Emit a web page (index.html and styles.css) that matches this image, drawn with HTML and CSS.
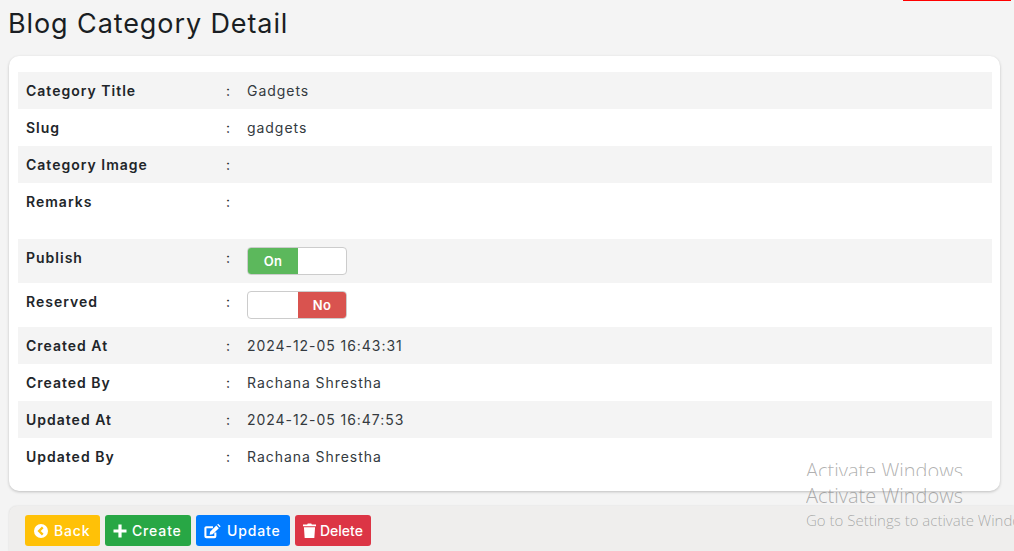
FILE: index.html
```html
<!DOCTYPE html>
<html lang="en">
<head>
<meta charset="utf-8">
<title>Blog Category Detail</title>
<link rel="stylesheet" href="styles.css">
</head>
<body>
<div class="top-line"></div>
<main class="page">
  <h1 class="title">Blog Category Detail</h1>
  <section class="card">
    <div class="row"><span class="label">Category Title</span><span class="colon">:</span><span class="value">Gadgets</span></div>
    <div class="row"><span class="label">Slug</span><span class="colon">:</span><span class="value">gadgets</span></div>
    <div class="row"><span class="label">Category Image</span><span class="colon">:</span><span class="value"></span></div>
    <div class="row row-tall"><span class="label">Remarks</span><span class="colon">:</span><span class="value"></span></div>
    <div class="row row-toggle"><span class="label">Publish</span><span class="colon">:</span>
      <div class="toggle"><span class="toggle-part toggle-left on">On</span><span class="toggle-part"></span></div></div>
    <div class="row row-toggle"><span class="label">Reserved</span><span class="colon">:</span>
      <div class="toggle"><span class="toggle-part toggle-left"></span><span class="toggle-part no">No</span></div></div>
    <div class="row"><span class="label">Created At</span><span class="colon">:</span><span class="value">2024-12-05 16:43:31</span></div>
    <div class="row"><span class="label">Created By</span><span class="colon">:</span><span class="value">Rachana Shrestha</span></div>
    <div class="row"><span class="label">Updated At</span><span class="colon">:</span><span class="value">2024-12-05 16:47:53</span></div>
    <div class="row"><span class="label">Updated By</span><span class="colon">:</span><span class="value">Rachana Shrestha</span></div>
  </section>
  <footer class="actions">
    <a class="btn btn-back"><svg class="icon" viewBox="0 0 16 16"><circle cx="8" cy="8" r="8" fill="#fff"/><path d="M10 3.800 5.800 8l4.200 4.200" fill="none" stroke="#ffc107" stroke-width="2.600"/></svg>Back</a>
    <a class="btn btn-create"><svg class="icon" viewBox="0 0 14 14"><path d="M7 .5v13M.5 7h13" fill="none" stroke="#fff" stroke-width="3.200"/></svg>Create</a>
    <a class="btn btn-update"><svg class="icon icon-edit" viewBox="0 0 18 16"><path d="M12 9.500V13.500a1 1 0 0 1-1 1H2.500a1 1 0 0 1-1-1V5a1 1 0 0 1 1-1h7" fill="none" stroke="#fff" stroke-width="2.200"/><path d="M6.500 8.800 13 2.300l2.700 2.700-6.500 6.500-3.200.5zM14 1.300l.9-.9 2.700 2.700-.9.9z" fill="#fff"/></svg>Update</a>
    <a class="btn btn-delete"><svg class="icon icon-trash" viewBox="0 0 14 16"><path d="M0 1.600h4.500L5.100.4h3.800l.6 1.200H14v1.800H0zM1 4.400h12L12.200 16H1.800z" fill="#fff"/></svg>Delete</a>
  </footer>
</main>
<div class="watermark">
  <div class="wm-clip"><span>Activate Windows</span></div>
  <div class="wm-big">Activate Windows</div>
  <div class="wm-small">Go to Settings to activate Windows.</div>
</div>
</body>
</html>
```
FILE: styles.css
```css
* { box-sizing: border-box; }
html, body { height: 100%; }
body {
  margin: 0;
  height: 551px;
  overflow: hidden;
  background: #f4f4f4;
  font-family: Inter, "Liberation Sans", sans-serif;
  color: #212529;
}
.top-line {
  position: absolute;
  top: 0;
  left: 903px;
  width: 108px;
  height: 1px;
  background: #f00;
}
.page { padding: 0 14px 0 9px; }
.title {
  margin: 0 0 0 -1px;
  padding-top: 7px;
  height: 56px;
  font-size: 27px;
  line-height: 33px;
  font-weight: 400;
  letter-spacing: 0.9px;
  color: #1a1e23;
}
.card {
  width: 991px;
  height: 435px;
  padding: 16px 8px 16px 9px;
  background: #fff;
  border-radius: 10px;
  box-shadow: 0 1px 3px rgba(0, 0, 0, .22);
}
.row {
  display: flex;
  height: 37px;
  align-items: flex-start;
  padding: 10px 8px 0;
  font-size: 14px;
  line-height: 18px;
  letter-spacing: 0.95px;
}
.row:nth-child(odd) { background: #f4f4f4; }
.row-tall { height: 56px; }
.row-toggle { height: 44px; }
.label { width: 200px; font-weight: 600; letter-spacing: 1px; color: #212529; }
.colon { width: 21px; }
.value { color: #343a40; font-weight: 400; }
.toggle {
  display: flex;
  width: 100px;
  height: 28px;
  margin-top: -2px;
  border: 1px solid #ccc;
  border-radius: 4px;
  background: #fff;
  overflow: hidden;
}
.toggle-part {
  flex: 1;
  color: #fff;
  text-align: center;
  font-size: 13px;
  font-weight: 600;
  line-height: 26px;
  letter-spacing: 0.4px;
}
.toggle-left { flex: 0 0 50px; }
.on { background: #5cb85c; }
.no { background: #d9534f; }
.actions {
  display: flex;
  gap: 5px;
  width: 1005px;
  height: 45px;
  margin-top: 15px;
  padding: 9px 16px 0;
  background: #efeeed;
  border-radius: 8px 0 0 0;
  box-shadow: 0 0 2px rgba(0, 0, 0, .12);
}
.btn {
  display: flex;
  align-items: center;
  gap: 6px;
  height: 31px;
  padding: 0 9px;
  border-radius: 3px;
  color: #fff;
  font-size: 14px;
  font-weight: 500;
  letter-spacing: 0.85px;
}
.btn-back { width: 75px; background: #ffc107; gap: 6px; }
.btn-create { width: 86px; background: #28a745; padding-left: 8px; gap: 5px; }
.btn-update { width: 94px; background: #007bff; padding-left: 8px; gap: 6px; }
.btn-delete { width: 76px; background: #dc3545; padding-left: 8px; gap: 4px; letter-spacing: 0; }
.icon { width: 14px; height: 14px; flex: none; }
.icon-edit { width: 17px; height: 16px; }
.icon-trash { width: 13px; height: 15px; }
.watermark {
  position: absolute;
  left: 806px;
  top: 457px;
  width: 208px;
  overflow: hidden;
  color: rgba(110, 110, 110, .55);
  font-family: "Open Sans", sans-serif;
  font-weight: 300;
  white-space: nowrap;
  pointer-events: none;
}
.wm-clip { height: 19px; overflow: hidden; font-size: 20px; line-height: 28px; }
.wm-big { margin-top: 6px; font-size: 20px; line-height: 28px; }
.wm-small { font-size: 15px; line-height: 20px; margin-top: 0; }
```
